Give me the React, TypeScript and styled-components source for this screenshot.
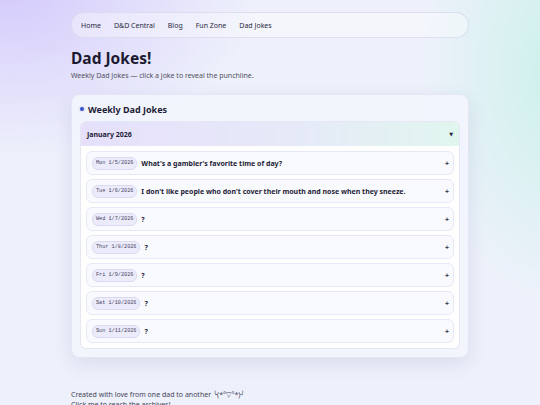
import styled, { createGlobalStyle } from 'styled-components';

const GlobalStyle = createGlobalStyle`
    html, body {
        margin: 0;
        padding: 0;
        height: 100%;
        overflow: hidden;
    }
    body {
        font-family: 'Noto Sans', 'DejaVu Sans', sans-serif;
        color: #1d1b36;
        background:
            radial-gradient(ellipse 250px 170px at 10px -10px, rgba(208, 196, 252, 0.85), rgba(208, 196, 252, 0) 100%),
            radial-gradient(ellipse 140px 240px at 560px 70px, rgba(200, 241, 233, 0.9), rgba(200, 241, 233, 0) 100%),
            #eef1fb;
    }
`;

const Page = styled.div`
    width: 398px;
    margin: 0 auto;
    padding-top: 12px;
    display: flex;
    flex-direction: column;
`;

const Nav = styled.nav`
    display: flex;
    align-items: center;
    gap: 13px;
    height: 26px;
    padding: 0 9px;
    border: 1px solid rgba(214, 216, 236, 0.8);
    border-radius: 14px;
    background: rgba(255, 255, 255, 0.35);
    box-sizing: border-box;
`;

const NavLink = styled.a`
    font-size: 7px;
    color: #2a2940;
    text-decoration: none;
`;

const Title = styled.h1`
    margin: 10px 0 0;
    font-size: 15.5px;
    font-weight: 700;
    line-height: 20px;
    color: #1b1a30;
`;

const Subtitle = styled.p`
    margin: 3px 0 0;
    font-size: 7px;
    line-height: 10px;
    color: #50505f;
`;

const Card = styled.section`
    margin-top: 13px;
    padding: 7px 8px 8px;
    border-radius: 9px;
    border: 1px solid rgba(226, 228, 244, 0.9);
    background: rgba(243, 245, 253, 0.9);
    box-shadow: 0 6px 18px rgba(120, 125, 170, 0.18);
    box-sizing: border-box;
`;

const CardHeading = styled.h2`
    display: flex;
    align-items: center;
    gap: 4px;
    margin: 0 0 5px;
    height: 14px;
    font-size: 9px;
    font-weight: 700;
    color: #1d1b36;
`;

const Dot = styled.span`
    width: 4px;
    height: 4px;
    border-radius: 50%;
    background: #3d57c9;
    box-shadow: 0 0 2px rgba(61, 87, 201, 0.5);
`;

const Month = styled.div`
    border-radius: 6px;
    overflow: hidden;
    border: 1px solid rgba(226, 228, 244, 0.9);
    background: #ffffff;
`;

const MonthHeader = styled.div`
    display: flex;
    align-items: center;
    justify-content: space-between;
    height: 24px;
    padding: 0 6px;
    background: linear-gradient(90deg, #e6e0fb 0%, #e6e9f8 55%, #e1f6ef 100%);
    font-size: 7px;
    font-weight: 700;
    color: #1d1b36;
`;

const Caret = styled.span`
    font-size: 5px;
    color: #22223a;
`;

const JokeList = styled.div`
    display: flex;
    flex-direction: column;
    gap: 4px;
    padding: 5px;
`;

const Joke = styled.div`
    display: flex;
    align-items: center;
    gap: 4px;
    height: 24px;
    padding: 0 4px 0 5px;
    border: 1px solid #e6e8f4;
    border-radius: 6px;
    background: #f9faff;
    box-sizing: border-box;
`;

const DatePill = styled.span`
    flex: 0 0 auto;
    padding: 0 3px;
    height: 11px;
    line-height: 11px;
    border-radius: 6px;
    border: 1px solid #dcdaf3;
    background: #ecebfb;
    font-family: 'Liberation Mono', 'DejaVu Sans Mono', monospace;
    font-size: 5.2px;
    color: #45445f;
`;

const Question = styled.span`
    flex: 1 1 auto;
    font-size: 7px;
    font-weight: 700;
    color: #1d1b36;
    white-space: nowrap;
`;

const Plus = styled.span`
    font-size: 7px;
    font-weight: 700;
    color: #2c2b48;
`;

const Footer = styled.footer`
    margin-top: 32px;
    font-size: 7px;
    line-height: 10px;
    color: #45445a;
`;

const links = ['Home', 'D&D Central', 'Blog', 'Fun Zone', 'Dad Jokes'];

const jokes = [
    { date: 'Mon 1/5/2026', text: "What's a gambler's favorite time of day?" },
    { date: 'Tue 1/6/2026', text: "I don't like people who don't cover their mouth and nose when they sneeze." },
    { date: 'Wed 1/7/2026', text: '?' },
    { date: 'Thur 1/8/2026', text: '?' },
    { date: 'Fri 1/9/2026', text: '?' },
    { date: 'Sat 1/10/2026', text: '?' },
    { date: 'Sun 1/11/2026', text: '?' },
];

const App = () => (
    <>
        <GlobalStyle />
        <Page>
            <Nav>
                {links.map((link) => (
                    <NavLink key={link} href="#">
                        {link}
                    </NavLink>
                ))}
            </Nav>
            <Title>Dad Jokes!</Title>
            <Subtitle>Weekly Dad Jokes — click a joke to reveal the punchline.</Subtitle>
            <Card>
                <CardHeading>
                    <Dot />
                    Weekly Dad Jokes
                </CardHeading>
                <Month>
                    <MonthHeader>
                        January 2026
                        <Caret>▼</Caret>
                    </MonthHeader>
                    <JokeList>
                        {jokes.map((joke) => (
                            <Joke key={joke.date}>
                                <DatePill>{joke.date}</DatePill>
                                <Question>{joke.text}</Question>
                                <Plus>+</Plus>
                            </Joke>
                        ))}
                    </JokeList>
                </Month>
            </Card>
            <Footer>
                Created with love from one dad to another ╰(*°▽°*)╯
                <br />
                Click me to reach the archives!
            </Footer>
        </Page>
    </>
);

export default App;
